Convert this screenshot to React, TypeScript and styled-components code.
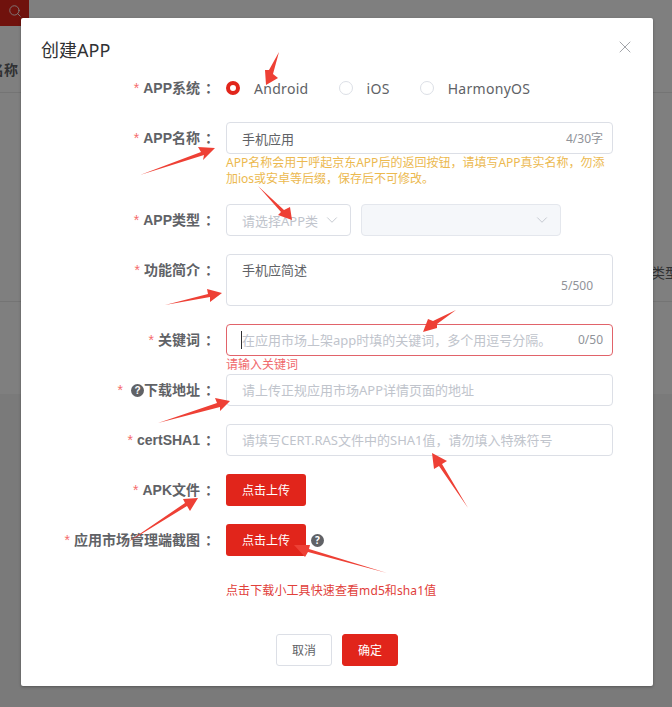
import styled, { createGlobalStyle } from 'styled-components';
import type { ReactNode } from 'react';
import { ChevronDown, Search, X } from 'lucide-react';

const GlobalStyle = createGlobalStyle`
  html, body {
    margin: 0;
    padding: 0;
    height: 100%;
    background: #fff;
    font-family: "Noto Sans", "Noto Sans CJK SC", sans-serif;
  }
  * { box-sizing: border-box; }
`

const Page = styled.div`
  position: relative;
  height: 707px;
  overflow: hidden;
`

const SearchButton = styled.div`
  width: 29px;
  height: 26px;
  padding-bottom: 4px;
  background: #e1251b;
  color: #fff;
  display: flex;
  align-items: center;
  justify-content: center;
`

const FilterRow = styled.div`
  height: 67px;
  padding-top: 34px;
  border-bottom: 1px solid #e8e8e8;
  font-size: 14px;
  font-weight: 700;
  color: #606266;
  line-height: 20px;
  margin-left: -10px;
`

const TableRow = styled.div`
  height: 209px;
  display: flex;
  justify-content: flex-end;
  align-items: flex-end;
  padding-bottom: 18px;
  border-bottom: 1px solid #e8e8e8;
  font-size: 14px;
  color: #606266;
  line-height: 20px;
  margin-right: -7px;
`

const EmptyRow = styled.div`
  height: 92px;
`

const Footer = styled.div`
  height: 313px;
  background: #f5f5f5;
`

const Mask = styled.div`
  position: absolute;
  inset: 0;
  background: rgba(0, 0, 0, 0.5);
`

const Modal = styled.div`
  position: absolute;
  left: 21px;
  top: 18px;
  width: 632px;
  height: 668px;
  background: #fff;
  border-radius: 2px;
  box-shadow: 0 1px 3px rgba(0, 0, 0, 0.3);
  padding: 20px 40px 20px 0;
`

const Title = styled.h2`
  margin: 0 0 0 20px;
  font-size: 18px;
  font-weight: 400;
  line-height: 24px;
  height: 34px;
  color: #303133;
`

const CloseButton = styled.div`
  position: absolute;
  top: 19px;
  right: 18px;
  color: #909399;
  display: flex;
`

const Row = styled.div<{ $gap?: number }>`
  display: flex;
  margin-bottom: ${p => p.$gap ?? 18}px;
`

const Label = styled.label`
  width: 205px;
  flex: none;
  padding-right: 7px;
  text-align: right;
  font-family: "Liberation Sans", "Noto Sans CJK SC", sans-serif;
  font-size: 14px;
  font-weight: 700;
  line-height: 32px;
  color: #606266;
  white-space: nowrap;
`

const Star = styled.span<{ $wide?: boolean }>`
  color: #f56c6c;
  font-weight: 400;
  margin-right: ${p => (p.$wide ? 8 : 4)}px;
`

const Colon = styled.span`
  margin-left: 5px;
`

const Field = styled.div`
  width: 387px;
  flex: none;
  position: relative;
`

const Radios = styled.div`
  display: flex;
  height: 32px;
  align-items: center;
`

const Radio = styled.div`
  display: flex;
  align-items: center;
  margin-right: 30px;
  font-size: 14px;
  letter-spacing: 0.3px;
  color: #606266;
`

const RadioDot = styled.span<{ $checked?: boolean }>`
  width: 14px;
  height: 14px;
  border-radius: 50%;
  margin-right: 14px;
  border: ${p => (p.$checked ? '4.5px solid #e1251b' : '1px solid #dcdfe6')};
  background: #fff;
`

const TextInput = styled.input<{ $error?: boolean }>`
  display: block;
  width: 100%;
  height: 32px;
  padding: 0 15px;
  border: 1px solid ${p => (p.$error ? '#e1636a' : '#dcdfe6')};
  border-radius: 4px;
  outline: none;
  background: #fff;
  font: inherit;
  font-size: 13px;
  color: #606266;
  &::placeholder {
    color: #c0c4cc;
    opacity: 1;
  }
`

const TextArea = styled.textarea`
  display: block;
  width: 100%;
  height: 52px;
  padding: 5px 15px;
  border: 1px solid #dcdfe6;
  border-radius: 4px;
  outline: none;
  resize: none;
  font: inherit;
  font-size: 13px;
  line-height: 21px;
  color: #606266;
`

const Count = styled.span<{ $right?: number; $bottom?: number }>`
  position: absolute;
  right: ${p => p.$right ?? 10}px;
  bottom: ${p => p.$bottom ?? 6}px;
  font-size: 12px;
  line-height: 20px;
  color: #909399;
`

const Caret = styled.span`
  position: absolute;
  left: 15px;
  top: 7px;
  width: 1px;
  height: 18px;
  background: #303133;
`

const Hint = styled.div`
  margin-top: 1px;
  height: 33px;
  font-size: 12px;
  line-height: 16px;
  color: #ecb94f;
`

const ErrorText = styled.div`
  height: 18px;
  font-size: 12px;
  line-height: 18px;
  color: #f0686b;
`

const Selects = styled.div`
  display: flex;
  gap: 10px;
`

const Select = styled.div<{ $width: number; $disabled?: boolean }>`
  width: ${p => p.$width}px;
  height: 32px;
  padding: 0 9px 0 15px;
  display: flex;
  align-items: center;
  justify-content: space-between;
  border: 1px solid ${p => (p.$disabled ? '#e4e7ed' : '#dcdfe6')};
  border-radius: 4px;
  background: ${p => (p.$disabled ? '#f5f7fa' : '#fff')};
  font-size: 13px;
  color: #c0c4cc;
  white-space: nowrap;
`

const Upload = styled.button`
  display: block;
  width: 80px;
  height: 32px;
  padding: 0;
  border: none;
  border-radius: 3px;
  background: #e1251b;
  color: #fff;
  font: inherit;
  font-size: 12px;
`

const UploadLine = styled.div`
  display: flex;
  align-items: center;
  gap: 5px;
`

const HelpDot = styled.span`
  display: inline-block;
  width: 13px;
  height: 13px;
  border-radius: 50%;
  background: #606266;
  color: #fff;
  font-size: 10px;
  font-weight: 700;
  line-height: 13px;
  text-align: center;
  vertical-align: 1px;
`

const Tip = styled.div`
  margin: 25px 0 33px 205px;
  height: 20px;
  font-size: 12px;
  letter-spacing: 0.1px;
  line-height: 20px;
  color: #e1403a;
`

const Actions = styled.div`
  display: flex;
  justify-content: center;
  gap: 10px;
  margin-right: -40px;
`

const ActionButton = styled.button<{ $primary?: boolean }>`
  width: 56px;
  height: 32px;
  padding: 0;
  border: 1px solid ${p => (p.$primary ? '#e1251b' : '#dcdfe6')};
  border-radius: 3px;
  background: ${p => (p.$primary ? '#e1251b' : '#fff')};
  color: ${p => (p.$primary ? '#fff' : '#606266')};
  font: inherit;
  font-size: 12px;
`

const Arrows = styled.svg`
  position: absolute;
  left: 0;
  top: 0;
  pointer-events: none;
`

const arrows = [
  '279,52 269,70 265,70 266,85 278,78 273,74',
  '140,175 201,152 198,147 215,148 203,160 204,155',
  '258,186 284,210 290,207 292,220 278,215 281,212',
  '165,305 208,294 207,289 222,293 210,302 210,297',
  '158,423 217,403 215,398 230,401 220,411 220,407',
  '456,310 433,321 428,319 423,332 437,328 437,324',
  '468,508 442,464 447,461 432,453 434,469 439,466',
  '125,544 187,506 190,511 198,498 183,499 185,503',
  '387,573 308,552 305,557 294,545 310,545 309,549',
]

function FormLabel({ children, wide }: { children: ReactNode; wide?: boolean }) {
  return (
    <Label>
      <Star $wide={wide}>*</Star>
      {children}
      <Colon>：</Colon>
    </Label>
  )
}

export default function App() {
  return (
    <Page>
      <GlobalStyle />
      <SearchButton><Search size={14} strokeWidth={1.5} /></SearchButton>
      <FilterRow>名称</FilterRow>
      <TableRow>类型</TableRow>
      <EmptyRow />
      <Footer />
      <Mask />
      <Modal>
        <Title>创建APP</Title>
        <CloseButton><X size={20} strokeWidth={1} /></CloseButton>

        <Row>
          <FormLabel>APP系统</FormLabel>
          <Field>
            <Radios>
              <Radio><RadioDot $checked />Android</Radio>
              <Radio><RadioDot />iOS</Radio>
              <Radio><RadioDot />HarmonyOS</Radio>
            </Radios>
          </Field>
        </Row>

        <Row $gap={16}>
          <FormLabel>APP名称</FormLabel>
          <Field>
            <TextInput readOnly value="手机应用" />
            <Hint>APP名称会用于呼起京东APP后的返回按钮，请填写APP真实名称，勿添加ios或安卓等后缀，保存后不可修改。</Hint>
            <Count $bottom={39}>4/30字</Count>
          </Field>
        </Row>

        <Row>
          <FormLabel>APP类型</FormLabel>
          <Selects>
            <Select $width={125}>请选择APP类<ChevronDown size={18} strokeWidth={1.2} /></Select>
            <Select $width={200} $disabled><span /><ChevronDown size={18} strokeWidth={1.2} /></Select>
          </Selects>
        </Row>

        <Row>
          <FormLabel>功能简介</FormLabel>
          <Field>
            <TextArea readOnly value="手机应简述" />
            <Count $right={20} $bottom={10}>5/500</Count>
          </Field>
        </Row>

        <Row $gap={0}>
          <FormLabel>关键词</FormLabel>
          <Field>
            <TextInput $error readOnly placeholder="在应用市场上架app时填的关键词，多个用逗号分隔。" />
            <Caret />
            <Count $bottom={24}>0/50</Count>
            <ErrorText>请输入关键词</ErrorText>
          </Field>
        </Row>

        <Row>
          <FormLabel wide><HelpDot>?</HelpDot>下载地址</FormLabel>
          <Field><TextInput readOnly placeholder="请上传正规应用市场APP详情页面的地址" /></Field>
        </Row>

        <Row>
          <FormLabel>certSHA1</FormLabel>
          <Field><TextInput readOnly placeholder="请填写CERT.RAS文件中的SHA1值，请勿填入特殊符号" /></Field>
        </Row>

        <Row>
          <FormLabel>APK文件</FormLabel>
          <Field><Upload>点击上传</Upload></Field>
        </Row>

        <Row $gap={0}>
          <FormLabel>应用市场管理端截图</FormLabel>
          <Field>
            <UploadLine><Upload>点击上传</Upload><HelpDot>?</HelpDot></UploadLine>
          </Field>
        </Row>

        <Tip>点击下载小工具快速查看md5和sha1值</Tip>

        <Actions>
          <ActionButton>取消</ActionButton>
          <ActionButton $primary>确定</ActionButton>
        </Actions>
      </Modal>
      <Arrows width="672" height="707" viewBox="0 0 672 707">
        {arrows.map(points => <polygon key={points} points={points} fill="#ee4035" />)}
      </Arrows>
    </Page>
  )
}
